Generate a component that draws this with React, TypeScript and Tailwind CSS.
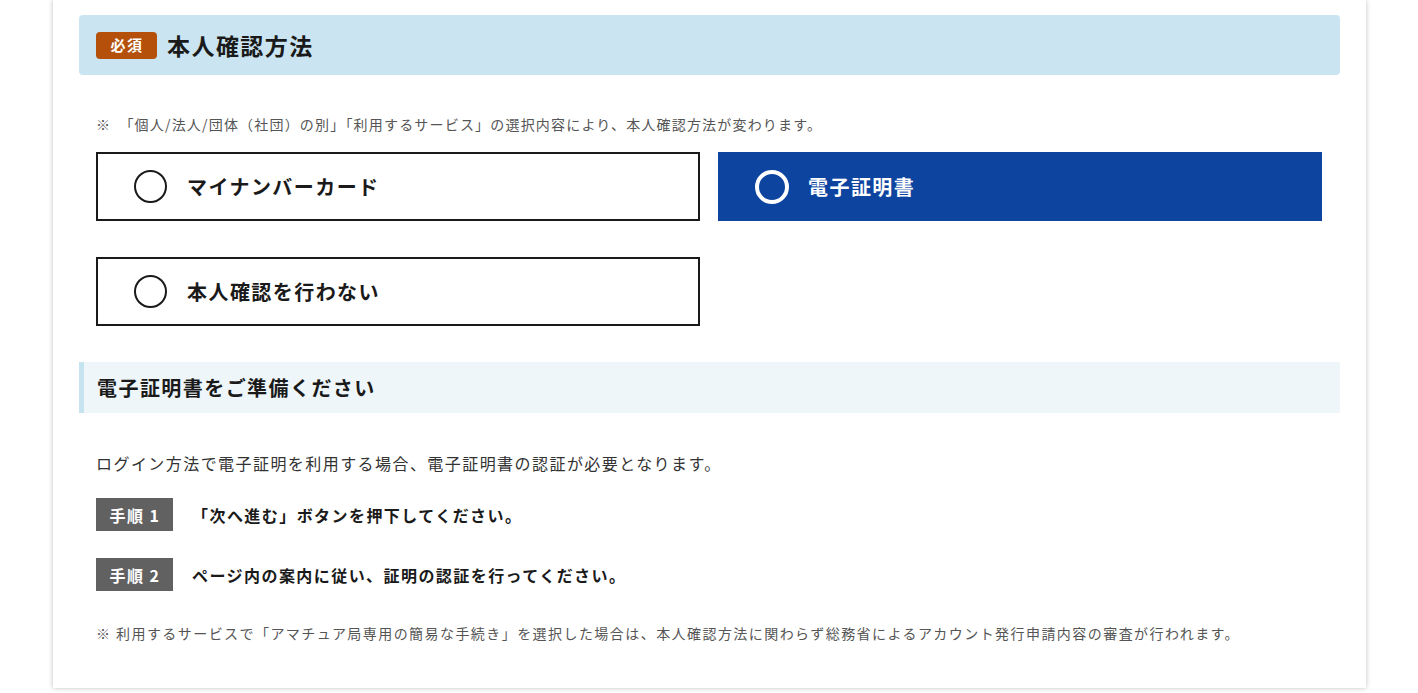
import { useState } from 'react'

const options = [
  { id: 'mynumber', label: 'マイナンバーカード' },
  { id: 'cert', label: '電子証明書' },
  { id: 'none', label: '本人確認を行わない' },
]

const steps = [
  { no: 1, text: '「次へ進む」ボタンを押下してください。' },
  { no: 2, text: 'ページ内の案内に従い、証明の認証を行ってください。' },
]

export default function App() {
  const [selected, setSelected] = useState('cert')

  return (
    <div
      className="min-h-screen bg-white px-[53px] pb-[5px] tracking-[0.09em]"
      style={{ fontFamily: '"Noto Sans CJK JP", "Noto Sans", sans-serif' }}
    >
      <div className="w-[1313px] bg-white px-[26px] pt-[15px] pb-[45px] shadow-[0_0_5px_rgba(0,0,0,0.25)]">
        {/* heading */}
        <div className="flex h-[60px] items-center gap-[10px] rounded-[4px] bg-[#cae5f1] px-[17px]">
          <span className="flex h-[27px] w-[61px] items-center justify-center rounded-[4px] bg-[#b4500a] pl-[1px] text-[15px] font-bold text-white">
            必須
          </span>
          <h2 className="text-[23px] font-bold text-[#1a1a1a]">本人確認方法</h2>
        </div>

        <p className="mt-[39px] pl-[17px] text-[14px] leading-[20px] tracking-[0.085em] text-[#555]">
          ※　「個人/法人/団体（社団）の別」「利用するサービス」の選択内容により、本人確認方法が変わります。
        </p>

        <div className="mt-[18px] ml-[17px] grid w-[1226px] grid-cols-2 gap-x-[18px] gap-y-[36px]">
          {options.map((opt) => {
            const active = selected === opt.id
            return (
              <button
                key={opt.id}
                onClick={() => setSelected(opt.id)}
                className={
                  active
                    ? 'flex h-[69px] items-center gap-[19px] border-2 border-[#0d44a0] bg-[#0d44a0] pl-[35px] text-left'
                    : 'flex h-[69px] items-center gap-[20px] border-2 border-[#1a1a1a] bg-white pl-[36px] text-left'
                }
              >
                <span
                  className={
                    active
                      ? 'h-[34px] w-[34px] rounded-full border-[4px] border-white'
                      : 'h-[33px] w-[33px] rounded-full border-2 border-[#1a1a1a]'
                  }
                />
                <span
                  className={
                    active
                      ? 'text-[20px] font-bold text-white'
                      : 'text-[20px] font-bold text-[#1a1a1a]'
                  }
                >
                  {opt.label}
                </span>
              </button>
            )
          })}
        </div>

        {/* sub heading */}
        <div className="mt-[36px] flex h-[51px] items-center border-l-[5px] border-[#c6e3f0] bg-[#eef6fa] pl-[13px]">
          <h3 className="text-[20px] font-bold text-[#1a1a1a]">電子証明書をご準備ください</h3>
        </div>

        <p className="mt-[38px] pl-[17px] text-[16px] leading-[24px] text-[#333]">
          ログイン方法で電子証明を利用する場合、電子証明書の認証が必要となります。
        </p>

        <div className="mt-[23px] flex flex-col gap-[27px] pl-[17px]">
          {steps.map((s) => (
            <div key={s.no} className="flex items-center gap-[19px]">
              <span className="flex h-[33px] w-[77px] items-center justify-center bg-[#616161] pl-[1px] text-[16px] font-bold text-white">
                手順 {s.no}
              </span>
              <span className="text-[16px] font-bold text-[#1a1a1a]">{s.text}</span>
            </div>
          ))}
        </div>

        <p className="mt-[32px] pl-[17px] text-[14px] leading-[20px] text-[#555]">
          ※ 利用するサービスで「アマチュア局専用の簡易な手続き」を選択した場合は、本人確認方法に関わらず総務省によるアカウント発行申請内容の審査が行われます。
        </p>
      </div>
    </div>
  )
}
